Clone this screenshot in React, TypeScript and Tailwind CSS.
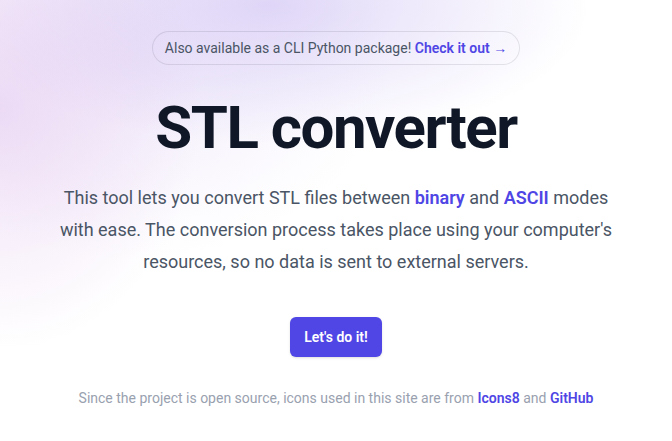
import React from 'react';

const App: React.FC = () => {
  return (
    <div className="relative min-h-screen overflow-hidden bg-white font-['Roboto',sans-serif]">
      {/* soft gradient glow behind hero */}
      <div className="pointer-events-none absolute inset-0 bg-[radial-gradient(ellipse_200px_240px_at_0px_110px,rgba(226,196,238,0.55),transparent),radial-gradient(ellipse_320px_140px_at_270px_5px,rgba(212,200,245,0.7),transparent),radial-gradient(ellipse_260px_200px_at_130px_60px,rgba(225,212,245,0.45),transparent)]" />

      <div className="relative mx-auto max-w-2xl px-6 pt-8 text-center">
        <div className="flex justify-center">
          <div className="rounded-full px-3 py-1 text-sm leading-6 text-gray-600 ring-1 ring-gray-900/10">
            Also available as a CLI Python package!{' '}
            <a href="#" className="font-semibold text-[#4f46e5]">
              Check it out{' '}
              <span aria-hidden="true" className="font-['Noto_Sans',sans-serif] font-normal">
                &rarr;
              </span>
            </a>
          </div>
        </div>

        <h1 className="mt-[34px] text-6xl font-bold tracking-tight text-gray-900">STL converter</h1>

        <p className="mx-auto mt-6 max-w-[560px] text-lg leading-8 text-gray-600">
          This tool lets you convert STL files between{' '}
          <a href="#" className="font-semibold text-[#4f46e5]">binary</a> and{' '}
          <a href="#" className="font-semibold text-[#4f46e5]">ASCII</a> modes with ease. The conversion
          process takes place using your computer's resources, so no data is sent to external servers.
        </p>

        <div className="mt-[39px] flex justify-center">
          <a
            href="#"
            className="rounded-md bg-[#4f46e5] px-3.5 py-2.5 text-sm font-semibold text-white shadow-sm"
          >
            Let's do it!
          </a>
        </div>

        <p className="mt-[31px] text-sm leading-5 text-gray-400">
          Since the project is open source, icons used in this site are from{' '}
          <a href="#" className="font-semibold text-[#4f46e5]">Icons8</a> and{' '}
          <a href="#" className="font-semibold text-[#4f46e5]">GitHub</a>
        </p>
      </div>
    </div>
  );
};

export default App;
